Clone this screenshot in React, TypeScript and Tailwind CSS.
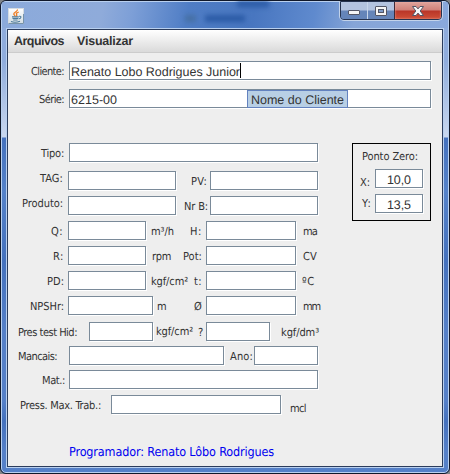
import { useLayoutEffect, useRef, useState } from "react";
import clsx from "clsx";

type TextProps = { children: string; w: number; className?: string };

/** One line of text, tracked so that it fills exactly `w` pixels. */
function Fit({ children, w, className }: TextProps) {
  const ref = useRef<HTMLSpanElement>(null);
  const [tracking, setTracking] = useState(0);
  useLayoutEffect(() => {
    if (ref.current) {
      setTracking((w - ref.current.getBoundingClientRect().width) / children.length);
    }
  }, [w, children]);
  return (
    <span className={clsx("block shrink-0 overflow-visible whitespace-pre", className)} style={{ width: w }}>
      <span ref={ref} className="inline-block" style={{ letterSpacing: tracking }}>
        {children}
      </span>
    </span>
  );
}

function Label({ className, ...rest }: TextProps) {
  return (
    <Fit
      {...rest}
      className={clsx(
        "h-[19px] font-['DejaVu_Sans_Condensed','DejaVu_Sans',sans-serif] text-[11px] leading-[21px] text-[#333333]",
        className,
      )}
    />
  );
}

function Field({ className, children }: { className: string; children?: React.ReactNode }) {
  return (
    <div
      className={clsx(
        "flex h-[19px] shrink-0 border border-[#7a8a99] bg-white text-[12.5px] leading-[20px] text-[#333333] shadow-[1px_1px_0_#ffffff]",
        className,
      )}
    >
      {children}
    </div>
  );
}

function Row({ className, children }: { className?: string; children: React.ReactNode }) {
  return <div className={clsx("flex h-[19px] items-start", className)}>{children}</div>;
}

function JavaIcon() {
  return (
    <svg width="16" height="16" viewBox="0 0 16 16" className="shrink-0">
      <defs>
        <linearGradient id="tile" x1="0" y1="0" x2="0" y2="1">
          <stop offset="0" stopColor="#ffffff" />
          <stop offset="1" stopColor="#d3dde3" />
        </linearGradient>
      </defs>
      <rect x="0.5" y="0.5" width="15" height="15" fill="url(#tile)" stroke="#d5dce2" />
      <path d="M0.5 15.5H15.5V6" fill="none" stroke="#7893a8" />
      <path d="M9.4 1.5C10 3.6 5.8 4.2 5.8 6C5.8 7 7.2 7.3 7.1 8.4M10.8 4C8.4 4.8 7.8 5.6 8.8 6.8C9 7.4 8.6 7.8 8.2 8.4" fill="none" stroke="#ee7b20" strokeWidth="1.3" />
      <path d="M4 8.9H10.8M4.5 10.5H10.2M5.2 12H9.6M11 8.3C13.9 7.6 13.4 10.7 10.6 11M3 13.6C5.5 14.4 9.5 14.2 12 13.3" fill="none" stroke="#4d7b9b" strokeWidth="1.1" />
    </svg>
  );
}

function WindowButtons() {
  return (
    <div className="-mt-px h-[20px] w-[104px] rounded-b-[5px] border border-t-0 border-[#c3d3ea]">
      <div className="flex h-full overflow-hidden rounded-b-[4px] border border-[#26334f]">
        <div className="flex w-[27px] items-center justify-center border-r border-[#c8d6ea] bg-linear-to-b from-[#b3c3df] from-45% to-[#6585b9] to-55%">
          <svg width="14" height="14" viewBox="0 0 14 14">
            <rect x="1.5" y="6.5" width="11" height="4" rx="0.5" fill="#f5f5f5" stroke="#535666" />
          </svg>
        </div>
        <div className="flex w-[27px] items-center justify-center border-r border-[#3f2a38] bg-linear-to-b from-[#b3c3df] from-45% to-[#6585b9] to-55%">
          <svg width="14" height="14" viewBox="0 0 14 14">
            <rect x="1.5" y="2.5" width="11" height="9" rx="0.5" fill="#f5f5f5" stroke="#535666" />
            <rect x="4.5" y="5.5" width="5" height="3" fill="#7d9bc9" stroke="#535666" />
          </svg>
        </div>
        <div className="flex flex-1 items-center justify-center bg-[linear-gradient(to_bottom,#dfa49c_0%,#cf8078_48%,#b93528_52%,#cf5038_100%)] shadow-[inset_0_0_2px_#f3b4a6]">
          <svg width="14" height="14" viewBox="0 0 14 14">
            <path d="M1.5 2.5H5L7 4.9L9 2.5H12.5L9.2 7L12.5 11.5H9L7 9.1L5 11.5H1.5L4.8 7Z" fill="#f8f8f8" stroke="#535666" />
          </svg>
        </div>
      </div>
    </div>
  );
}

export default function App() {
  return (
    <div className="h-[474px] w-[450px] bg-[#808488]">
      <div className="relative h-[474px] w-[450px] overflow-hidden rounded-[6px] border border-[#10182a] bg-[linear-gradient(to_bottom,#8facdc_0px,#8facdc_60px,#c9d7ee_136px,#4471bd_137px,#5582c9_190px,#4471bd_260px,#5580c8_330px,#5580c8_400px,#4471bd_420px,#5580c8_450px)]">
        <div className="flex h-full flex-col rounded-[5px] border border-[#b9d0ef] font-['Liberation_Sans',Arial,sans-serif] [text-rendering:geometricPrecision]">
          <header className="flex h-[26px] shrink-0 justify-between bg-[linear-gradient(100deg,#8baadb_0px,#8fabda_100px,#7d9fd7_130px,#4f7dc5_185px,#4876c0_250px,#5f8ace_310px,#86a5d7_350px,#8aa9dc_450px)] pl-[6px] pr-[5px]">
            <div className="pt-[6px]">
              <JavaIcon />
            </div>
            <div className="ml-auto mr-[70px] mt-[13px] flex blur-[2.5px]">
              <span className="h-[7px] w-[11px] bg-[#4670a4]" />
              <span className="ml-[9px] h-[7px] w-[40px] bg-[#2b5ba6]" />
              <span className="-ml-[8px] -mt-[14px] h-[6px] w-[32px] bg-[#2b5ba6]" />
            </div>
            <WindowButtons />
          </header>
          <main className="mx-[4px] flex h-[440px] w-[438px] flex-col border border-[#b9d0ef]">
            <div className="flex h-full flex-col border border-[#2b3c5c] bg-[#eeeeee]">
              <nav className="flex h-[23px] shrink-0 border-b border-[#cccccc] bg-linear-to-b from-white to-[#dadada] pl-[6px] text-[12.5px] font-bold leading-[22px] text-[#333333]">
                <Fit w={50}>Arquivos</Fit>
                <Fit w={56} className="ml-[13px]">Visualizar</Fit>
              </nav>

              <Row className="mt-[8px]">
                <Label w={33} className="ml-[23px]">Cliente:</Label>
                <Field className="ml-[5px] w-[362px] pl-px">
                  <Fit w={169}>Renato Lobo Rodrigues Junior</Fit>
                  <span className="mt-px h-[15px] w-px bg-black" />
                </Field>
              </Row>
              <Row className="mt-[9px]">
                <Label w={25} className="ml-[31px]">Série:</Label>
                <Field className="ml-[5px] w-[362px] pl-px">
                  <Fit w={46}>6215-00</Fit>
                  <div className="ml-[130px] flex h-[18px] w-[101px] shrink-0 border border-[#6382bf] bg-[#b8cfe5] pl-[3px] leading-[18px]">
                    <Fit w={93}>Nome do Cliente</Fit>
                  </div>
                </Field>
              </Row>

              <div className="mt-[35px] flex items-start">
                <section className="w-[344px]">
                  <Row>
                    <Label w={23} className="ml-[33px]">Tipo:</Label>
                    <Field className="ml-[5px] w-[249px]" />
                  </Row>
                  <Row className="mt-[9px]">
                    <Label w={23} className="-mt-[3px] ml-[32px]">TAG:</Label>
                    <Field className="ml-[5px] w-[108px]" />
                    <Label w={16} className="ml-[15px]">PV:</Label>
                    <Field className="ml-[3px] w-[108px]" />
                  </Row>
                  <Row className="mt-[6px]">
                    <Label w={41} className="-mt-[3px] ml-[14px]">Produto:</Label>
                    <Field className="ml-[5px] w-[108px]" />
                    <Label w={24} className="ml-[8px]">Nr B:</Label>
                    <Field className="ml-[2px] w-[108px]" />
                  </Row>
                  <Row className="mt-[6px]">
                    <Label w={12} className="ml-[43px]">Q:</Label>
                    <Field className="ml-[5px] w-[78px]" />
                    <Label w={23} className="ml-[5px]">m³/h</Label>
                    <Label w={12} className="ml-[16px]">H:</Label>
                    <Field className="ml-[4px] w-[90px]" />
                    <Label w={14} className="ml-[7px]">ma</Label>
                  </Row>
                </section>
                <aside className="flex h-[78px] w-[79px] flex-col border border-black">
                  <Label w={56} className="ml-[9px] mt-[2px]">Ponto Zero:</Label>
                  <Row className="mt-[4px]">
                    <Label w={10} className="ml-[7px] mt-[3px]">X:</Label>
                    <Field className="ml-[5px] w-[48px] pl-[11px]">
                      <Fit w={24}>10,0</Fit>
                    </Field>
                  </Row>
                  <Row className="mt-[6px]">
                    <Label w={10} className="-mt-px ml-[9px]">Y:</Label>
                    <Field className="ml-[3px] w-[48px] pl-[11px]">
                      <Fit w={24}>13,5</Fit>
                    </Field>
                  </Row>
                </aside>
              </div>

              <Row className="mt-[6px]">
                <Label w={11} className="ml-[45px]">R:</Label>
                <Field className="ml-[4px] w-[78px]" />
                <Label w={19} className="ml-[6px]">rpm</Label>
                <Label w={19} className="ml-[12px]">Pot:</Label>
                <Field className="ml-[4px] w-[90px]" />
                <Label w={14} className="ml-[7px]">CV</Label>
              </Row>
              <Row className="mt-[6px]">
                <Label w={17} className="ml-[39px]">PD:</Label>
                <Field className="ml-[4px] w-[78px]" />
                <Label w={37} className="ml-[5px]">kgf/cm²</Label>
                <Label w={8} className="ml-[6px]">t:</Label>
                <Field className="ml-[4px] w-[90px]" />
                <Label w={13} className="ml-[6px]">ºC</Label>
              </Row>
              <Row className="mt-[6px]">
                <Label w={34} className="ml-[22px]">NPSHr:</Label>
                <Field className="ml-[4px] w-[85px]" />
                <Label w={9} className="ml-[4px]">m</Label>
                <Label w={8} className="ml-[28px]">Ø</Label>
                <Field className="ml-[4px] w-[90px]" />
                <Label w={17} className="ml-[7px]">mm</Label>
              </Row>
              <Row className="mt-[7px]">
                <Label w={59} className="ml-[10px]">Pres test Hid:</Label>
                <Field className="ml-[12px] w-[64px]" />
                <Label w={37} className="-mt-px ml-[3px]">kgf/cm²</Label>
                <Label w={6} className="ml-[5px]">?</Label>
                <Field className="ml-[2px] w-[64px]" />
                <Label w={38} className="ml-[11px]">kgf/dm³</Label>
              </Row>
              <Row className="mt-[5px]">
                <Label w={39} className="ml-[10px]">Mancais:</Label>
                <Field className="ml-[12px] w-[155px]" />
                <Label w={23} className="ml-[6px]">Ano:</Label>
                <Field className="ml-px w-[64px]" />
              </Row>
              <Row className="mt-[5px]">
                <Label w={23} className="ml-[34px]">Mat.:</Label>
                <Field className="ml-[4px] w-[249px]" />
              </Row>
              <Row className="mt-[6px]">
                <Label w={81} className="ml-[12px]">Press. Max. Trab.:</Label>
                <Field className="ml-[10px] w-[170px]" />
                <Label w={16} className="ml-[9px] mt-[3px]">mcl</Label>
              </Row>
              <footer className="ml-[61px] mt-[28px] font-['DejaVu_Sans_Condensed','DejaVu_Sans',sans-serif] text-[12.5px] leading-[20px] text-[#0000f0]">
                <Fit w={205}>Programador: Renato Lôbo Rodrigues</Fit>
              </footer>
            </div>
          </main>
        </div>
      </div>
    </div>
  );
}
